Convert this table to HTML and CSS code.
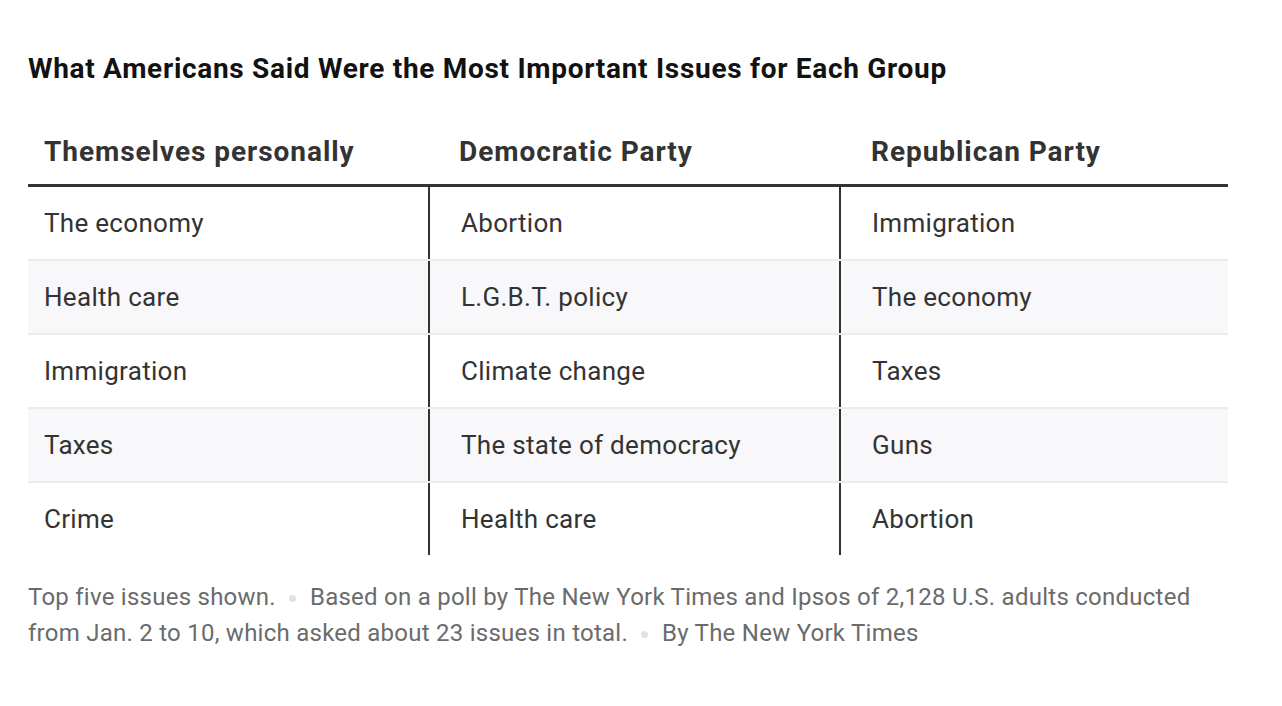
FILE: index.html
```html
<!DOCTYPE html>
<html>
<head>
<meta charset="utf-8">
<link rel="stylesheet" href="styles.css">
</head>
<body>
<div class="wrap">
  <h1 class="title">What Americans Said Were the Most Important Issues for Each Group</h1>
  <div class="table">
    <div class="row head">
      <div class="cell c1">Themselves personally</div>
      <div class="cell c2">Democratic Party</div>
      <div class="cell c3">Republican Party</div>
    </div>
    <div class="row">
      <div class="cell c1">The economy</div>
      <div class="cell c2">Abortion</div>
      <div class="cell c3">Immigration</div>
    </div>
    <div class="row alt">
      <div class="cell c1">Health care</div>
      <div class="cell c2">L.G.B.T. policy</div>
      <div class="cell c3">The economy</div>
    </div>
    <div class="row">
      <div class="cell c1">Immigration</div>
      <div class="cell c2">Climate change</div>
      <div class="cell c3">Taxes</div>
    </div>
    <div class="row alt">
      <div class="cell c1">Taxes</div>
      <div class="cell c2">The state of democracy</div>
      <div class="cell c3">Guns</div>
    </div>
    <div class="row last">
      <div class="cell c1">Crime</div>
      <div class="cell c2">Health care</div>
      <div class="cell c3">Abortion</div>
    </div>
  </div>
  <p class="note">Top five issues shown.<span class="dot"></span>Based on a poll by The New York Times and Ipsos of 2,128 U.S. adults conducted from Jan. 2 to 10, which asked about 23 issues in total.<span class="dot"></span>By The New York Times</p>
</div>
</body>
</html>
```
FILE: styles.css
```css
html, body { margin: 0; padding: 0; background: #fff; }
body { font-family: Roboto, "Liberation Sans", sans-serif; }
.wrap { width: 1200px; padding: 52px 0 0 28px; }
.title {
  margin: 0;
  font-size: 28px;
  line-height: 34px;
  font-weight: 700;
  letter-spacing: 0.7px;
  color: #121212;
}
.table { margin-top: 32px; }
.row {
  display: grid;
  grid-template-columns: 400px 411px 389px;
  height: 74px;
  border-top: 2px solid #ececec;
  box-sizing: border-box;
}
.row.alt { background: #f8f7f9; }
.row.head {
  height: 69px;
  border-top: none;
  border-bottom: 3px solid #333;
}
.row.head + .row { border-top: none; height: 72px; }
.cell {
  display: flex;
  align-items: center;
  font-size: 26px;
  letter-spacing: 0.3px;
  color: #333;
}
.c1 { padding-left: 16px; }
.c2 { padding-left: 31px; border-left: 2px solid #333; }
.c3 { padding-left: 31px; border-left: 2px solid #333; }
.head .cell {
  font-weight: 700;
  font-size: 28px;
  letter-spacing: 0.95px;
  color: #333;
  border-left: none;
}
.head .c2 { padding-left: 31px; }
.head .c3 { padding-left: 32px; }
.note {
  margin: 24px 0 0 0;
  width: 1200px;
  font-size: 24px;
  line-height: 36px;
  letter-spacing: 0.25px;
  color: #6b6b6b;
}
.dot {
  display: inline-block;
  width: 7px;
  height: 7px;
  border-radius: 50%;
  background: #e2e2e2;
  vertical-align: middle;
  margin: 0 14px 0 13px;
}
```
